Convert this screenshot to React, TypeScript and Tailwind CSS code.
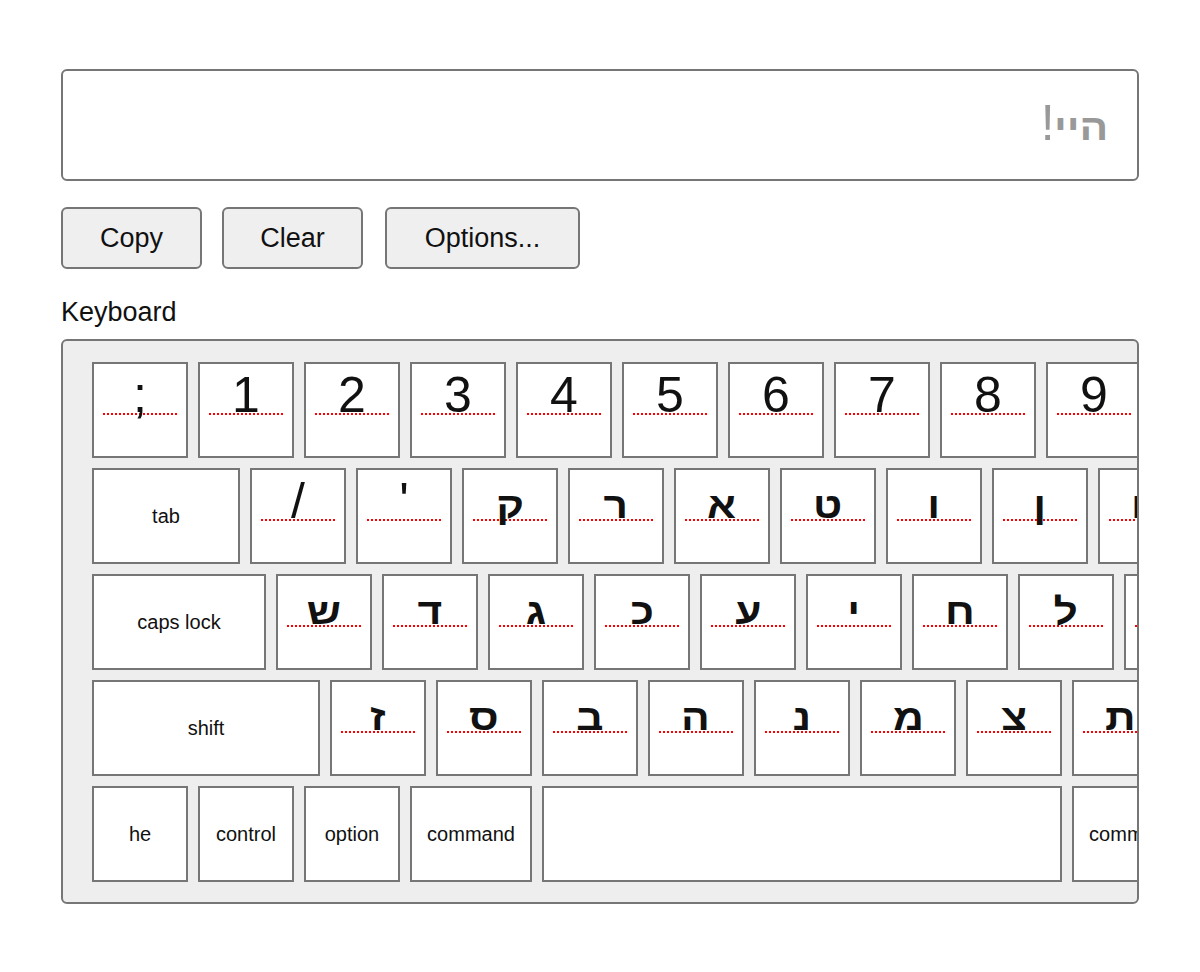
import React from "react";

type K = { c?: string; l?: string; w?: number };

const rows: K[][] = [
  [
    { c: ";" }, { c: "1" }, { c: "2" }, { c: "3" }, { c: "4" }, { c: "5" }, { c: "6" },
    { c: "7" }, { c: "8" }, { c: "9" }, { c: "0" }, { c: "-" }, { c: "=" }, { l: "delete", w: 148 },
  ],
  [
    { l: "tab", w: 148 }, { c: "/" }, { c: "'" }, { c: "ק" }, { c: "ר" }, { c: "א" }, { c: "ט" },
    { c: "ו" }, { c: "ן" }, { c: "ם" }, { c: "פ" }, { c: "]" }, { c: "[" }, { c: "\\" },
  ],
  [
    { l: "caps lock", w: 174 }, { c: "ש" }, { c: "ד" }, { c: "ג" }, { c: "כ" }, { c: "ע" }, { c: "י" },
    { c: "ח" }, { c: "ל" }, { c: "ך" }, { c: "ף" }, { c: "," }, { l: "return", w: 174 },
  ],
  [
    { l: "shift", w: 228 }, { c: "ז" }, { c: "ס" }, { c: "ב" }, { c: "ה" }, { c: "נ" }, { c: "מ" },
    { c: "צ" }, { c: "ת" }, { c: "ץ" }, { c: "." }, { l: "shift", w: 228 },
  ],
  [
    { l: "he" }, { l: "control" }, { l: "option" }, { l: "command", w: 122 }, { l: "", w: 520 },
    { l: "command", w: 122 }, { l: "option" },
  ],
];

const isHebrew = (s: string) => /[\u0590-\u05FF]/.test(s);

function Key({ k }: { k: K }) {
  const w = k.w ?? 96;
  return (
    <div
      className="h-[96px] shrink-0 border-2 border-[#767676] bg-white"
      style={{ width: w }}
    >
      {k.c !== undefined ? (
        <div className="ml-[9px] mr-[9px] flex h-[51px] items-end justify-center border-b-2 border-dotted border-[#ff0000]">
          {isHebrew(k.c) ? (
            <span className="inline-block scale-x-[1.15] text-[37px] font-bold leading-[0.693] text-[#111]">
              {k.c}
            </span>
          ) : (
            <span className="text-[50px] leading-[0.693] text-[#111]">{k.c}</span>
          )}
        </div>
      ) : (
        <div className="flex h-full items-center justify-center whitespace-nowrap text-[20px] text-[#111]">
          {k.l}
        </div>
      )}
    </div>
  );
}

export default function App() {
  return (
    <div className="min-h-[972px] bg-white px-[61px] pt-[69px] font-['Liberation_Sans',Arial,sans-serif] text-black">
      <div className="flex h-[112px] items-center justify-end rounded-[6px] border-2 border-[#767676] bg-white pr-[29px] text-[#999]">
        <div className="mb-[4px] flex items-baseline leading-none">
          <span className="text-[50px]">!</span>
          <span
            dir="rtl"
            className="ml-[6px] inline-block origin-right scale-x-[1.15] text-[37px] font-bold"
          >
            היי
          </span>
        </div>
      </div>

      <div className="mt-[26px] flex">
        <button className="h-[62px] w-[141px] rounded-[6px] border-2 border-[#767676] bg-[#efefef] text-[27px] text-[#111]">
          Copy
        </button>
        <button className="ml-[20px] h-[62px] w-[141px] rounded-[6px] border-2 border-[#767676] bg-[#efefef] text-[27px] text-[#111]">
          Clear
        </button>
        <button className="ml-[22px] h-[62px] w-[195px] rounded-[6px] border-2 border-[#767676] bg-[#efefef] text-[27px] text-[#111]">
          Options...
        </button>
      </div>

      <div className="mt-[28px] text-[27px] leading-[31px] text-[#111]">Keyboard</div>

      <div className="mt-[11px] overflow-hidden rounded-[6px] border-2 border-[#767676] bg-[#eeeeee] pb-[20px] pl-[29px] pt-[21px]">
        <div className="flex flex-col gap-[10px]">
          {rows.map((r, i) => (
            <div key={i} className="flex gap-[10px]">
              {r.map((k, j) => (
                <Key key={j} k={k} />
              ))}
            </div>
          ))}
        </div>
      </div>
    </div>
  );
}
